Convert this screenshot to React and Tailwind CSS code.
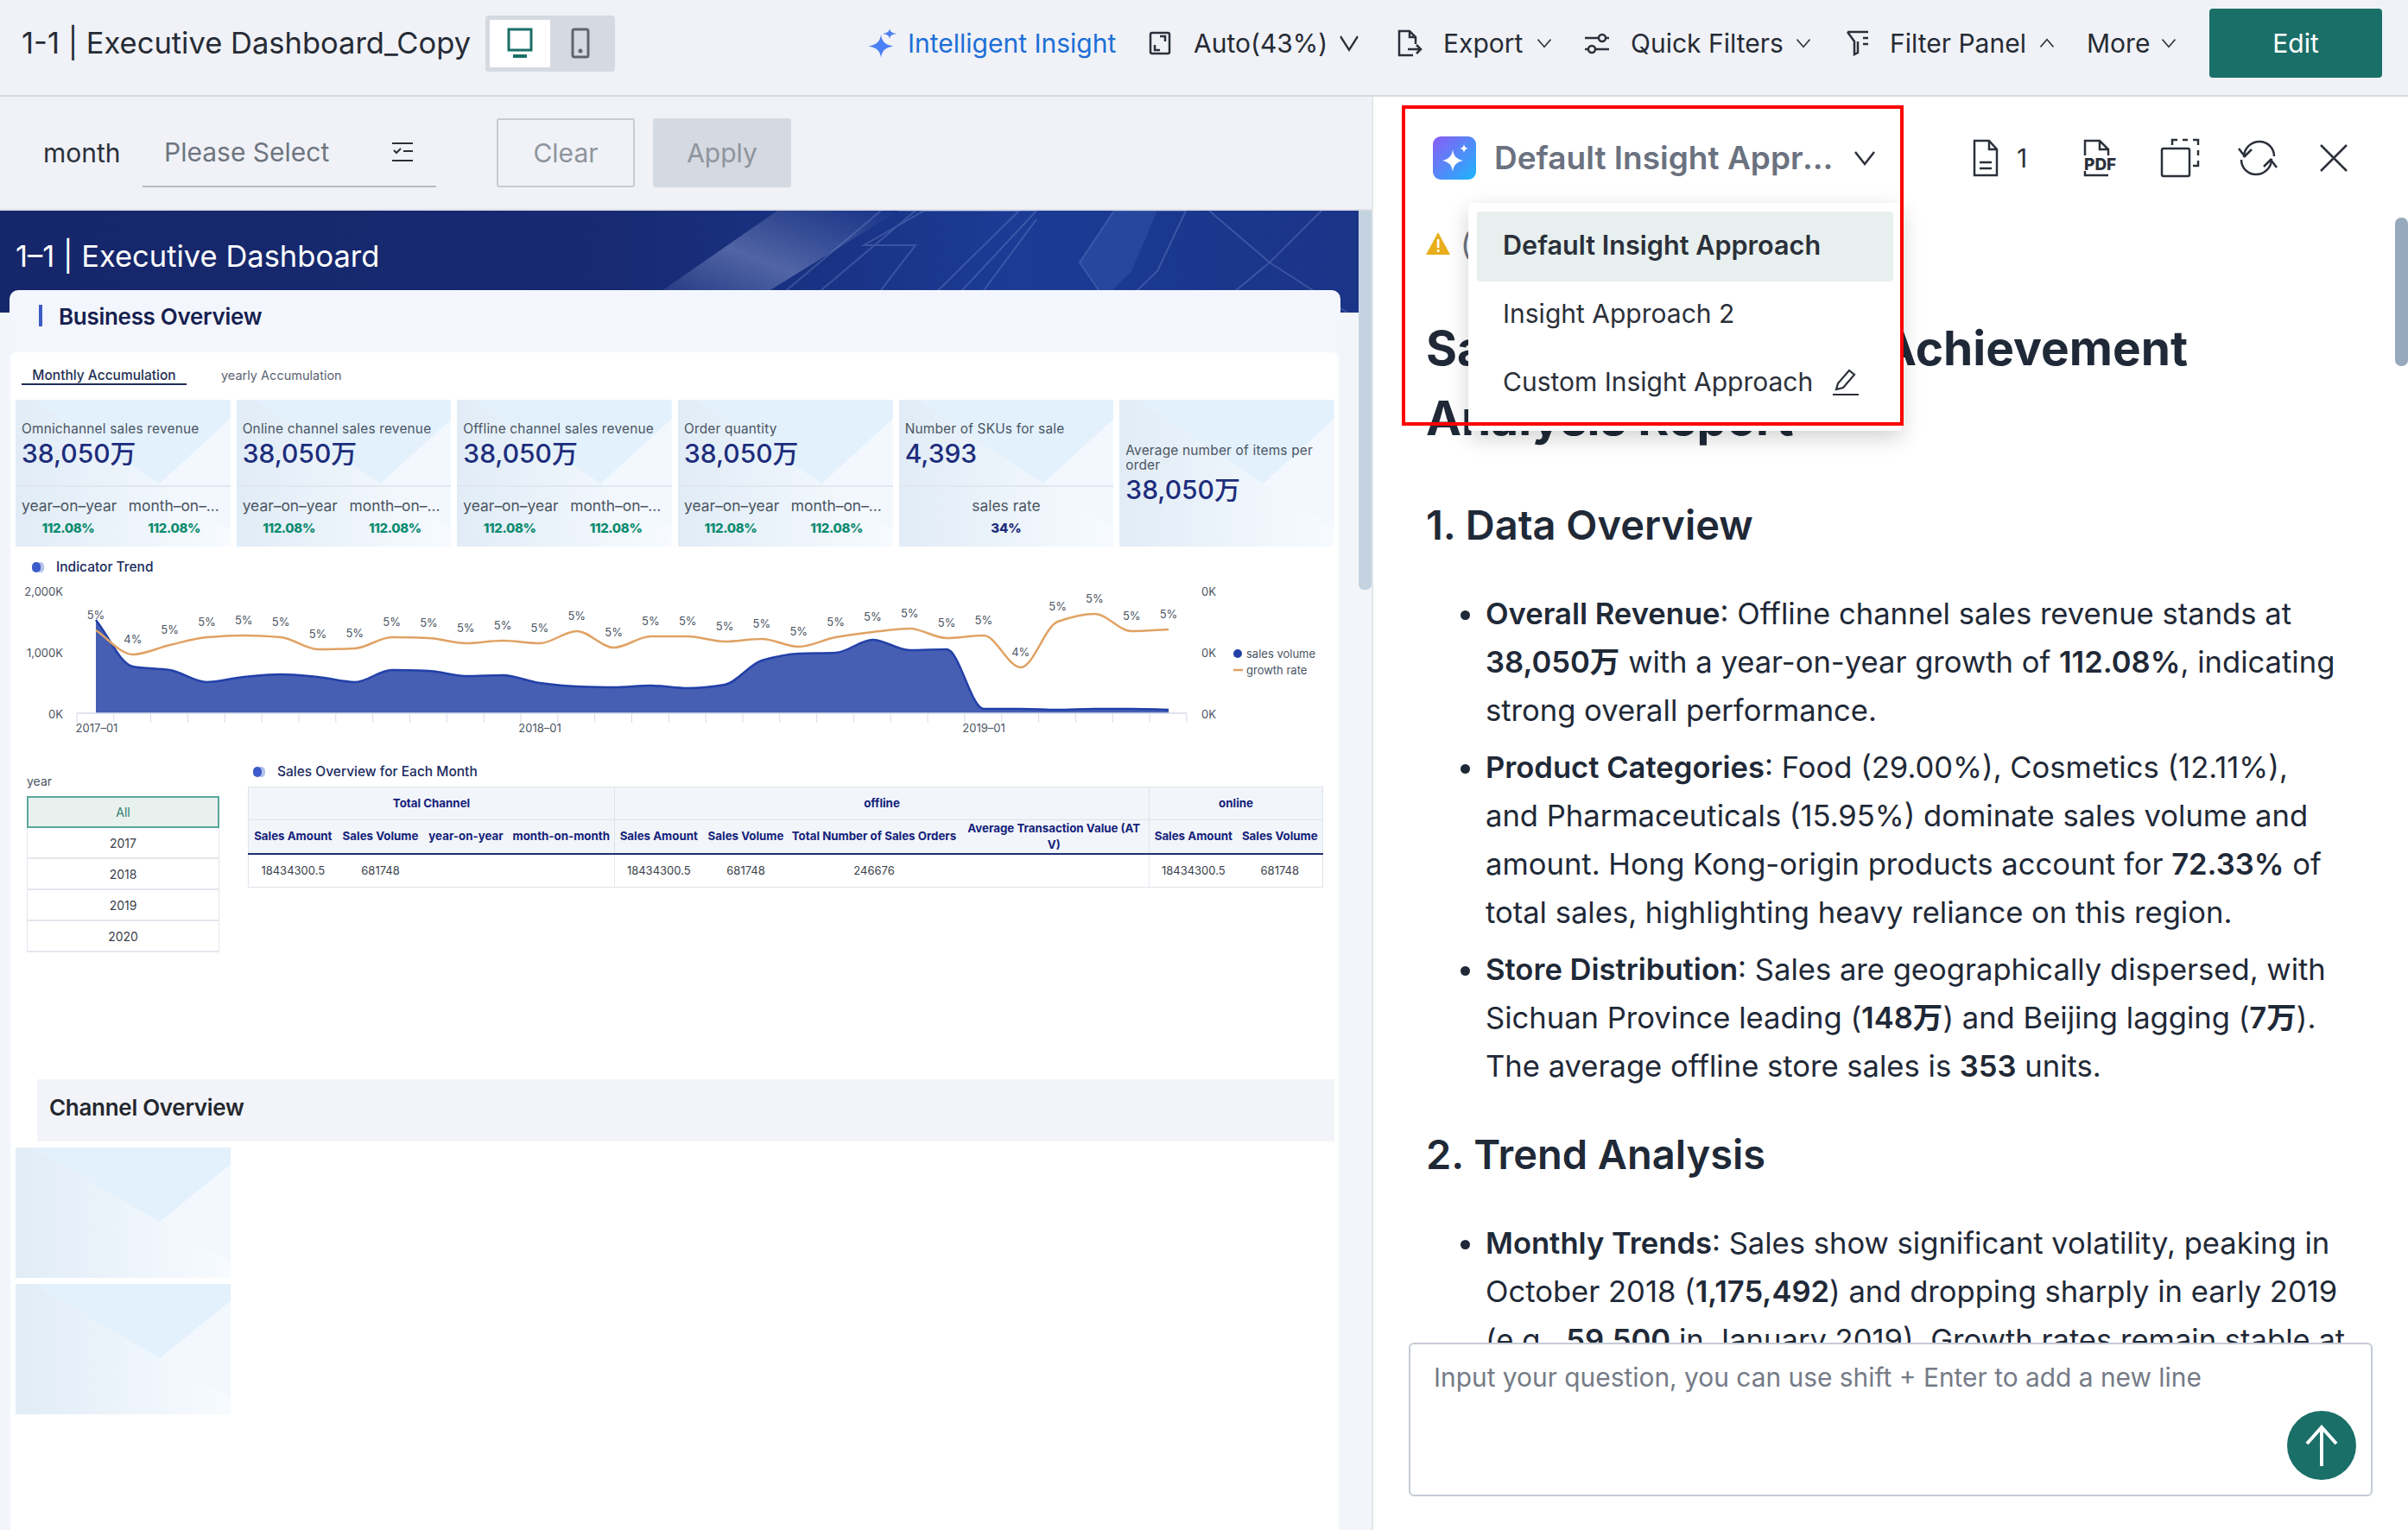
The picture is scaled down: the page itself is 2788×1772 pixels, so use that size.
const kpis = [
  { title: "Omnichannel sales revenue", value: "38,050万" },
  { title: "Online channel sales revenue", value: "38,050万" },
  { title: "Offline channel sales revenue", value: "38,050万" },
  { title: "Order quantity", value: "38,050万" },
];

const areaY = [718, 772, 776, 790, 784, 781, 784, 790, 776, 777, 783, 782, 791, 795, 796, 794, 797, 793, 765, 757, 756, 741, 753, 752, 821, 821, 822, 821, 821, 822];
const lineY = [730, 758, 747, 738, 736, 738, 752, 751, 738, 739, 745, 742, 745, 731, 750, 737, 737, 743, 740, 749, 738, 732, 728, 739, 736, 773, 720, 711, 731, 729];
const xAt = (i) => 111 + i * 42.83;

// monotone curve so the lines do not overshoot between the points
function smooth(ys) {
  const slopes = ys.map((y, i) => {
    if (i === 0) return ys[1] - y;
    if (i === ys.length - 1) return y - ys[i - 1];
    const a = y - ys[i - 1];
    const b = ys[i + 1] - y;
    if (a * b <= 0) return 0;
    return (2 * a * b) / (a + b);
  });
  let d = `M${xAt(0)} ${ys[0]}`;
  for (let i = 0; i < ys.length - 1; i++) {
    d += ` C${xAt(i) + 14.3} ${ys[i] + slopes[i] / 3} ${xAt(i + 1) - 14.3} ${ys[i + 1] - slopes[i + 1] / 3} ${xAt(i + 1)} ${ys[i + 1]}`;
  }
  return d;
}

function CardBg() {
  return (
    <svg className="absolute inset-0 w-full h-full" viewBox="0 0 100 100" preserveAspectRatio="none">
      <defs>
        <linearGradient id="cardBase" x1="0" y1="0" x2="1" y2="0">
          <stop offset="0" stopColor="#e1ecf6" />
          <stop offset="1" stopColor="#f7fbff" />
        </linearGradient>
      </defs>
      <rect width="100" height="100" fill="url(#cardBase)" />
      <polygon points="67,57 100,13 100,88" fill="#f2f8fe" />
      <polygon points="8,0 100,0 100,13 67,57" fill="#e3f1fd" />
    </svg>
  );
}

function Title({ children }) {
  return (
    <div className="flex items-center">
      <span className="relative w-[14px] h-[12px]">
        <span className="absolute left-[5px] top-0 w-[9px] h-[12px] rounded-full bg-[#b4c2ec]"></span>
        <span className="absolute left-0 top-0 w-[10px] h-[12px] rounded-full bg-[#3d5bc9]"></span>
      </span>
      <span className="ml-[14px] text-[15.5px] leading-[20px] font-medium text-[#1a2a5e]">{children}</span>
    </div>
  );
}

function Kpi({ title, value }) {
  return (
    <div className="relative h-[170px] overflow-hidden">
      <CardBg />
      <div className="relative h-[101px] border-b-2 border-[#e0e7ef] pl-[7px] pt-[24px]">
        <div className="text-[15.4px] leading-[20px] text-[#4b5563] tracking-[0.2px] whitespace-nowrap">{title}</div>
        <div className="text-[30px] leading-[36px] font-medium text-[#1d2d7c]">{value}</div>
      </div>
      <div className="relative grid grid-cols-2 pl-[7px] pr-[6px] pt-[11px]">
        <div className="text-[17.4px] leading-[22px] text-[#4b5563] whitespace-nowrap">year–on–year</div>
        <div className="text-[17.4px] leading-[22px] text-[#4b5563] whitespace-nowrap pl-[6px]">month–on–...</div>
        <div className="text-[15px] leading-[20px] font-extrabold text-[#0c8b6f] text-center pt-[5px] tracking-tight pr-[10px]">112.08%</div>
        <div className="text-[15px] leading-[20px] font-extrabold text-[#0c8b6f] text-center pt-[5px] tracking-tight">112.08%</div>
      </div>
    </div>
  );
}

function TrendChart() {
  const ticks = [];
  for (let i = 0; i <= 30; i++) ticks.push(89 + i * 42.83);
  return (
    <svg className="block" width="1538" height="190" viewBox="12 670 1538 190">
      <path d={`${smooth(areaY)} L${xAt(29)} 826 L${xAt(0)} 826 Z`} fill="#465fb3" />
      <path d={smooth(areaY)} fill="none" stroke="#2240a8" strokeWidth="2.5" />
      <path d={smooth(lineY)} fill="none" stroke="#e0a264" strokeWidth="2.5" />
      <line x1="89" y1="826" x2="1374" y2="826" stroke="#d5dbe8" strokeWidth="1.5" />
      {ticks.map((x) => (
        <line key={x} x1={x} y1="826" x2={x} y2="837" stroke="#d5dbe8" />
      ))}
      {lineY.map((y, i) => (
        <text key={i} x={xAt(i)} y={y - 13} textAnchor="middle" fontSize="13" fill="#4b5563">
          {i === 1 || i === 25 ? "4%" : "5%"}
        </text>
      ))}
      <g fontSize="13" fill="#4b5563">
        <text x="73" y="690" textAnchor="end">2,000K</text>
        <text x="73" y="761" textAnchor="end">1,000K</text>
        <text x="73" y="832" textAnchor="end">0K</text>
        <text x="1391" y="690">0K</text>
        <text x="1391" y="761">0K</text>
        <text x="1391" y="832">0K</text>
        <text x="112" y="848" textAnchor="middle">2017–01</text>
        <text x="625" y="848" textAnchor="middle">2018–01</text>
        <text x="1139" y="848" textAnchor="middle">2019–01</text>
        <text x="1443" y="762">sales volume</text>
        <text x="1443" y="781">growth rate</text>
      </g>
      <ellipse cx="1433" cy="757" rx="5" ry="5" fill="#2240a8" />
      <line x1="1428" y1="776" x2="1439" y2="776" stroke="#e0a264" strokeWidth="2.5" />
    </svg>
  );
}

function Chevron({ up, big }) {
  const w = big ? 24 : 18;
  return (
    <svg width={w} height={big ? 22 : 12} viewBox="0 0 24 14" preserveAspectRatio="none" fill="none" stroke="#2b303a" strokeWidth="2">
      <path d={up ? "M2 12 12 2 22 12" : "M2 2 12 12 22 2"} />
    </svg>
  );
}

function SparkIcon() {
  return (
    <svg width="34" height="34" viewBox="0 0 34 34" fill="#4b7ff5">
      <path d="M15 7 C16 15 20 19 29.5 20.5 C20 22 16 26 15 34 C14 26 10 22 0.5 20.5 C10 19 14 15 15 7Z" />
      <path d="M25 0 C25.6 3.5 27 5 33 6 C27 7 25.6 8.5 25 12 C24.4 8.5 23 7 17 6 C23 5 24.4 3.5 25 0Z" />
    </svg>
  );
}

function Toolbar() {
  return (
    <div className="h-[112px] shrink-0 border-b-2 border-[#d5d9e0] bg-[#f0f2f7] flex items-center pb-[10px] text-[#262b35]">
      <div className="ml-[25px] text-[34.5px] leading-[44px] whitespace-nowrap w-[537px]">1-1 | Executive Dashboard_Copy</div>
      <div className="w-[150px] h-[65px] rounded-[4px] bg-[#d5d9e1] flex items-center pl-[5px]">
        <div className="w-[70px] h-[55px] bg-white flex items-center justify-center">
          <svg width="30" height="36" viewBox="0 0 30 36" fill="none" stroke="#1a6f68" strokeWidth="3">
            <rect x="2" y="2" width="26" height="24" />
            <path d="M7 33h16" strokeWidth="4" />
          </svg>
        </div>
        <div className="w-[70px] flex items-center justify-center">
          <svg width="22" height="36" viewBox="0 0 22 36" fill="none" stroke="#5f6670" strokeWidth="3">
            <rect x="2" y="2" width="18" height="32" rx="2" />
            <circle cx="11" cy="27" r="1" fill="#5f6670" />
          </svg>
        </div>
      </div>
      <div className="ml-[293px]"><SparkIcon /></div>
      <div className="ml-[12px] text-[30px] text-[#1d6fd6] whitespace-nowrap w-[279px]">Intelligent Insight</div>
      <svg width="26" height="30" viewBox="0 0 26 30" fill="none" stroke="#2b303a" strokeWidth="2.5">
        <rect x="2" y="3" width="22" height="24" rx="2" />
        <path d="M7 17v6h6M19 13V7h-6" />
      </svg>
      <div className="ml-[26px] text-[30px] whitespace-nowrap w-[168px]">Auto(43%)</div>
      <Chevron big />
      <svg className="ml-[42px]" width="32" height="34" viewBox="0 0 32 34" fill="none" stroke="#2b303a" strokeWidth="2.5">
        <path d="M20 31H4V3h12l7 7v8M16 3v7h7M14 24h15M24 19l5 5-5 5" />
      </svg>
      <div className="ml-[23px] text-[30px] whitespace-nowrap w-[108px]">Export</div>
      <Chevron />
      <svg className="ml-[36px]" width="32" height="32" viewBox="0 0 32 32" fill="none" stroke="#2b303a" strokeWidth="2.5">
        <path d="M2 10h16M26 10h4M2 23h4M14 23h16" />
        <circle cx="22" cy="10" r="4" />
        <circle cx="10" cy="23" r="4" />
      </svg>
      <div className="ml-[23px] text-[30px] whitespace-nowrap w-[191px]">Quick Filters</div>
      <Chevron />
      <svg className="ml-[40px]" width="28" height="32" viewBox="0 0 28 32" fill="none" stroke="#2b303a" strokeWidth="2.5">
        <path d="M2 3h24M2 3l8 11v15l4-2V14M20 10h6M20 17h6" />
      </svg>
      <div className="ml-[23px] text-[30px] whitespace-nowrap w-[173px]">Filter Panel</div>
      <Chevron up />
      <div className="ml-[37px] text-[30px] whitespace-nowrap w-[86px]">More</div>
      <Chevron />
      <div className="ml-[38px] w-[200px] h-[80px] rounded-[4px] bg-[#1a6f68] text-white text-[30px] flex items-center justify-center">Edit</div>
    </div>
  );
}

function FilterBar() {
  return (
    <div className="h-[132px] shrink-0 border-b-2 border-[#dcdfe6] bg-[#f0f2f7] flex items-center">
      <div className="ml-[50px] text-[30px] text-[#2b303a] w-[115px]">month</div>
      <div className="w-[340px] h-[80px] border-b-2 border-[#b8bcc4] flex items-center justify-between pl-[25px] pr-[26px]">
        <span className="text-[30px] text-[#6f7580]">Please Select</span>
        <svg width="26" height="24" viewBox="0 0 26 24" fill="none" stroke="#2b303a" strokeWidth="2">
          <path d="M1 2h24M14 11h11M1 22h24M3 10l3 3 5-5" />
        </svg>
      </div>
      <div className="ml-[70px] w-[160px] h-[80px] rounded-[3px] border-2 border-[#c8ccd4] text-[30px] text-[#8f949d] flex items-center justify-center">Clear</div>
      <div className="ml-[21px] w-[160px] h-[80px] rounded-[3px] bg-[#d5d9e1] text-[30px] text-[#8f949d] flex items-center justify-center">Apply</div>
    </div>
  );
}

function Banner() {
  return (
    <div className="relative h-[118px] bg-[#16276b] overflow-hidden">
      <svg className="absolute inset-0 w-full h-full" viewBox="0 0 1573 118" preserveAspectRatio="none">
        <defs>
          <linearGradient id="bannerGrad" x1="0" y1="0" x2="1" y2="0">
            <stop offset="0" stopColor="#16266a" />
            <stop offset="0.45" stopColor="#172a72" />
            <stop offset="0.75" stopColor="#1b3b95" />
            <stop offset="1" stopColor="#1a3487" />
          </linearGradient>
          <linearGradient id="bandGrad" x1="0" y1="1" x2="1" y2="0">
            <stop offset="0" stopColor="#5a6fb0" stopOpacity="0" />
            <stop offset="0.5" stopColor="#6a7cb5" stopOpacity="0.7" />
            <stop offset="1" stopColor="#5a6fb0" stopOpacity="0" />
          </linearGradient>
        </defs>
        <rect width="1573" height="118" fill="url(#bannerGrad)" />
        <polygon points="730,118 900,0 1040,0 850,118" fill="url(#bandGrad)" />
        <g fill="none" stroke="#8fa6dc" strokeOpacity="0.28" strokeWidth="2">
          <path d="M880 118 1020 0M920 118 1060 0M1000 40 1070 0 1200 0 1090 118 1000 118 1060 40Z" />
          <path d="M1040 0 1180 0 1060 118M1120 118 1200 10M1250 60 1290 0 1373 0 1340 70 1290 118Z" />
          <path d="M1400 0 1470 60 1530 0M1470 60 1400 118M1470 60 1560 118" />
        </g>
        <polygon points="1250,60 1290,0 1340,0 1310,70 1280,100" fill="#3f60b8" fillOpacity="0.35" />
      </svg>
      <div className="relative pl-[18px] pt-[36px] text-[34.5px] leading-[34px] text-white whitespace-nowrap">1–1 | Executive Dashboard</div>
    </div>
  );
}

function YearList() {
  const years = ["2017", "2018", "2019", "2020"];
  return (
    <div className="w-[223px] pt-[35px] shrink-0">
      <div className="text-[14px] leading-[20px] text-[#4b5563]">year</div>
      <div className="mt-[7px] h-[37px] border-2 border-[#5ba79b] bg-[#e9f1ef] text-[#2d7d72] text-[14px] flex items-center justify-center">All</div>
      {years.map((y) => (
        <div key={y} className="h-[36px] border border-t-0 border-b-2 border-[#e4e6ec] text-[14px] text-[#3a3f4a] flex items-center justify-center">{y}</div>
      ))}
    </div>
  );
}

function SalesTable() {
  const headCls = "border border-[#dfe3ea] text-[13.3px] leading-[19px] font-bold text-[#14227a] text-center p-0 whitespace-nowrap";
  const cellCls = "text-[13px] text-[#3a3f4a] text-center p-0";
  return (
    <div className="pt-[24px] w-[1244px]">
      <div className="ml-[6px]"><Title>Sales Overview for Each Month</Title></div>
      <table className="mt-[7px] w-[1244px] table-fixed border-collapse border border-[#dfe3ea]">
        <colgroup>
          <col className="w-[103px]" /><col className="w-[100px]" /><col className="w-[98px]" /><col className="w-[123px]" />
          <col className="w-[102px]" /><col className="w-[100px]" /><col className="w-[197px]" /><col className="w-[220px]" />
          <col className="w-[102px]" /><col className="w-[99px]" />
        </colgroup>
        <thead className="bg-[#f2f5fa]">
          <tr className="h-[38px]">
            <th colSpan={4} className={headCls}>Total Channel</th>
            <th colSpan={4} className={headCls}>offline</th>
            <th colSpan={2} className={headCls}>online</th>
          </tr>
          <tr className="h-[38px] border-b-2 border-[#1f2f72]">
            <th className="text-[13.3px] font-bold text-[#14227a] border-l border-[#dfe3ea]">Sales Amount</th>
            <th className="text-[13.3px] font-bold text-[#14227a]">Sales Volume</th>
            <th className="text-[13.3px] font-bold text-[#14227a]">year-on-year</th>
            <th className="text-[13.3px] font-bold text-[#14227a]">month-on-month</th>
            <th className="text-[13.3px] font-bold text-[#14227a] border-l border-[#dfe3ea]">Sales Amount</th>
            <th className="text-[13.3px] font-bold text-[#14227a]">Sales Volume</th>
            <th className="text-[13.3px] font-bold text-[#14227a] whitespace-nowrap">Total Number of Sales Orders</th>
            <th className="text-[13.3px] leading-[19px] font-bold text-[#14227a] break-all px-[4px]">Average Transaction Value (AT V)</th>
            <th className="text-[13.3px] font-bold text-[#14227a] border-l border-[#dfe3ea]">Sales Amount</th>
            <th className="text-[13.3px] font-bold text-[#14227a]">Sales Volume</th>
          </tr>
        </thead>
        <tbody>
          <tr className="h-[38px]">
            <td className={cellCls}>18434300.5</td>
            <td className={cellCls}>681748</td>
            <td className={cellCls}></td>
            <td className={cellCls}></td>
            <td className={`${cellCls} border-l border-[#e6e9ef]`}>18434300.5</td>
            <td className={cellCls}>681748</td>
            <td className={cellCls}>246676</td>
            <td className={cellCls}></td>
            <td className={`${cellCls} border-l border-[#e6e9ef]`}>18434300.5</td>
            <td className={cellCls}>681748</td>
          </tr>
        </tbody>
      </table>
    </div>
  );
}

function Dashboard() {
  return (
    <div className="relative flex-1 overflow-hidden bg-[#f2f6fb]">
      <div className="w-[1573px]">
        <Banner />
        <div className="relative -mt-[26px] ml-[11px] w-[1541px] rounded-t-[10px] bg-[#f3f6fc]">
          <div className="h-[72px] flex items-start pl-[34px] pt-[17px]">
            <div className="w-[4px] h-[25px] bg-[#3b5cc4]"></div>
            <div className="ml-[19px] text-[26px] leading-[30px] -mt-[1px] font-semibold text-[#15204f] tracking-[-0.3px]">Business Overview</div>
          </div>
          <div className="ml-[1px] w-[1538px] h-[1400px] rounded-t-[8px] bg-white">
            <div className="h-[55px] flex items-start pt-[19px] pl-[13px]">
              <div className="w-[191px] h-[19px] border-b-2 border-[#1f2f55] text-center text-[15.5px] leading-[15px] font-medium text-[#1f2f55] whitespace-nowrap">Monthly Accumulation</div>
              <div className="ml-[40px] text-[14.5px] leading-[16px] text-[#5b6472]">yearly Accumulation</div>
            </div>
            <div className="ml-[6px] w-[1527px] grid grid-cols-6 gap-[7px]">
              {kpis.map((k) => (
                <Kpi key={k.title} title={k.title} value={k.value} />
              ))}
              <div className="relative h-[170px] overflow-hidden">
                <CardBg />
                <div className="relative h-[101px] border-b-2 border-[#e0e7ef] pl-[7px] pt-[24px]">
                  <div className="text-[15.4px] leading-[20px] text-[#4b5563] tracking-[0.2px]">Number of SKUs for sale</div>
                  <div className="text-[30px] leading-[36px] font-medium text-[#1d2d7c]">4,393</div>
                </div>
                <div className="relative text-center pt-[11px]">
                  <div className="text-[17.4px] leading-[22px] text-[#4b5563]">sales rate</div>
                  <div className="text-[15px] leading-[20px] font-extrabold text-[#1d2d7c] pt-[5px]">34%</div>
                </div>
              </div>
              <div className="relative h-[170px] overflow-hidden">
                <CardBg />
                <div className="relative pl-[7px] pt-[50px] pr-[6px]">
                  <div className="text-[15.4px] leading-[17px] text-[#4b5563] tracking-[0.2px]">Average number of items per order</div>
                  <div className="text-[30px] leading-[36px] font-medium text-[#1d2d7c] mt-[2px]">38,050万</div>
                </div>
              </div>
            </div>
            <div className="h-[37px] pt-[14px] pl-[25px]"><Title>Indicator Trend</Title></div>
            <TrendChart />
            <div className="h-[390px] flex pl-[19px]">
              <YearList />
              <div className="ml-[33px]"><SalesTable /></div>
            </div>
            <div className="ml-[31px] w-[1502px] h-[72px] bg-[#f3f4f9] flex items-center pl-[14px] pb-[8px] text-[26px] font-semibold text-[#24272e] tracking-[-0.3px]">Channel Overview</div>
            <div className="ml-[6px] mt-[7px] w-[249px] flex flex-col gap-[7px]">
              <div className="relative h-[151px]"><CardBg /></div>
              <div className="relative h-[151px]"><CardBg /></div>
            </div>
          </div>
        </div>
      </div>
      <div className="absolute right-0 top-0 w-[15px] h-[439px] rounded-b-[6px] bg-[#c5d3e0]"></div>
    </div>
  );
}

function Report() {
  return (
    <div className="flex-1 overflow-hidden pl-[61px] pr-[72px] text-[34.6px] leading-[56px] text-[#1f2937]">
      <div className="h-[56px] flex items-center">
        <svg width="28" height="26" viewBox="0 0 28 26">
          <path d="M14 0 28 26H0Z" fill="#e8ae1c" />
          <rect x="12.8" y="8" width="2.6" height="10" fill="#fff" />
          <rect x="12.8" y="20" width="2.6" height="3" fill="#fff" />
        </svg>
        <span className="ml-[12px] text-[#6b7280]">(</span>
      </div>
      <h1 className="mt-[53px] text-[55px] leading-[81px] font-bold whitespace-nowrap">Sales Progress and Achievement<br />Analysis Report</h1>
      <h2 className="mt-[50px] text-[47px] leading-[65px] font-semibold">1. Data Overview</h2>
      <ul className="mt-[42px] list-disc pl-[69px] flex flex-col gap-[10px]">
        <li><b className="font-semibold">Overall Revenue</b>: Offline channel sales revenue stands at <b className="font-semibold">38,050万</b> with a year-on-year growth of <b className="font-semibold">112.08%</b>, indicating strong overall performance.</li>
        <li><b className="font-semibold">Product Categories</b>: Food (29.00%), Cosmetics (12.11%), and Pharmaceuticals (15.95%) dominate sales volume and amount. Hong Kong-origin products account for <b className="font-semibold">72.33%</b> of total sales, highlighting heavy reliance on this region.</li>
        <li><b className="font-semibold">Store Distribution</b>: Sales are geographically dispersed, with Sichuan Province leading (<b className="font-semibold">148万</b>) and Beijing lagging (<b className="font-semibold">7万</b>). The average offline store sales is <b className="font-semibold">353</b> units.</li>
      </ul>
      <h2 className="mt-[42px] text-[47px] leading-[65px] font-semibold">2. Trend Analysis</h2>
      <ul className="mt-[42px] list-disc pl-[69px]">
        <li><b className="font-semibold">Monthly Trends</b>: Sales show significant volatility, peaking in October 2018 (<b className="font-semibold">1,175,492</b>) and dropping sharply in early 2019 (e.g., <b className="font-semibold">59,500</b> in January 2019). Growth rates remain stable at around 5%.</li>
      </ul>
    </div>
  );
}

function InsightPanel() {
  return (
    <div className="relative flex-1 flex flex-col bg-white border-l border-[#e3e6eb]">
      {/* header */}
      <div className="h-[142px] shrink-0 flex items-center pl-[69px]">
        <svg width="50" height="50" viewBox="0 0 50 50">
          <defs>
            <linearGradient id="logoGrad" x1="0" y1="0" x2="1" y2="1">
              <stop offset="0" stopColor="#8b5cf6" />
              <stop offset="1" stopColor="#1cb5fb" />
            </linearGradient>
          </defs>
          <rect width="50" height="50" rx="9" fill="url(#logoGrad)" />
          <path d="M23 15C24 23 27 26 35 28C27 30 24 33 23 41C22 33 19 30 11 28C19 26 22 23 23 15Z" fill="#fff" />
          <path d="M36 9C36.5 12 38 13.5 41 14C38 14.5 36.5 16 36 19C35.5 16 34 14.5 31 14C34 13.5 35.5 12 36 9Z" fill="#fff" />
        </svg>
        <div className="ml-[21px] w-[396px] truncate text-[37px] leading-[50px] font-semibold text-[#6b7280]">Default Insight Approach</div>
        <svg className="ml-[20px]" width="26" height="20" viewBox="0 0 26 20" fill="none" stroke="#2b303a" strokeWidth="2.5">
          <path d="M2 3 13 17 24 3" />
        </svg>
        <svg className="ml-[111px]" width="32" height="46" viewBox="0 0 32 46" fill="none" stroke="#2b303a" strokeWidth="2.5">
          <path d="M3 3h17l9 10v30H3ZM20 3v10h9M9 28h14M9 35h14" />
        </svg>
        <span className="ml-[20px] text-[30px] text-[#2b303a]">1</span>
        <svg className="ml-[63px]" width="46" height="46" viewBox="0 0 46 46" fill="none" stroke="#2b303a" strokeWidth="2.5">
          <path d="M4 20V3h17l10 10v7M21 3v10h10M4 38v5h27" />
          <text x="3" y="37" fontSize="19" fontWeight="800" fill="#2b303a" stroke="none">PDF</text>
        </svg>
        <svg className="ml-[45px]" width="46" height="46" viewBox="0 0 46 46" fill="none" stroke="#2b303a" strokeWidth="2.5">
          <rect x="2" y="12" width="32" height="32" rx="2" />
          <path d="M14 8V2h6M26 2h6M38 2h6v6M44 14v6M44 26v6h-6" />
        </svg>
        <svg className="ml-[43px]" width="48" height="46" viewBox="0 0 48 46" fill="none" stroke="#2b303a" strokeWidth="2.5">
          <path d="M8 22C8 11 17 4 26 4C36 4 43 12 43 21M40 24C40 35 31 42 22 42C12 42 5 34 5 25M2 12l7 9 8-8M46 34l-7-9-8 8" />
        </svg>
        <svg className="ml-[47px]" width="34" height="34" viewBox="0 0 34 34" fill="none" stroke="#2b303a" strokeWidth="2.5">
          <path d="M2 2 32 32M32 2 2 32" />
        </svg>
      </div>

      <Report />

      {/* question box */}
      <div className="shrink-0 h-[217px] pl-[41px]">
        <div className="w-[1116px] h-[178px] rounded-[6px] border-2 border-[#c6cbd5] bg-white flex justify-between pl-[27px] pr-[17px] pb-[17px]">
          <div className="pt-[16px] text-[29.9px] leading-[44px] text-[#757b87]">Input your question, you can use shift + Enter to add a new line</div>
          <div className="self-end w-[80px] h-[80px] rounded-full bg-[#1a6f68] flex items-center justify-center shrink-0">
            <svg width="40" height="48" viewBox="0 0 40 48" fill="none" stroke="#fff" strokeWidth="4">
              <path d="M20 48V3M3 22 20 3 37 22" />
            </svg>
          </div>
        </div>
      </div>

      {/* scrollbar thumb */}
      <div className="absolute right-0 top-[140px] w-[15px] h-[172px] rounded-[7px] bg-[#97a9bc]"></div>

      {/* dropdown menu */}
      <div className="absolute left-[110px] top-[123px] w-[502px] h-[264px] rounded-[4px] bg-white shadow-[0_8px_24px_rgba(0,0,0,0.18)] p-[10px] text-[30px] text-[#2b303a]">
        <div className="h-[81px] rounded-[4px] bg-[#e8f0ef] pl-[30px] pb-[3px] flex items-center text-[30.6px] font-semibold whitespace-nowrap">Default Insight Approach</div>
        <div className="h-[74px] pl-[30px] flex items-center whitespace-nowrap">Insight Approach 2</div>
        <div className="h-[84px] pl-[30px] flex items-center whitespace-nowrap">
          Custom Insight Approach
          <svg className="ml-[22px]" width="32" height="32" viewBox="0 0 32 32" fill="none" stroke="#2b303a" strokeWidth="2.2">
            <path d="M1 31h30M5 25l2-7L20 3l6 5L13 23Z" />
          </svg>
        </div>
      </div>

      {/* red highlight */}
      <div className="absolute left-[33px] top-[10px] w-[581px] h-[371px] border-4 border-[#ff0000]"></div>
    </div>
  );
}

export default function App() {
  return (
    <div className="w-[2788px] h-[1772px] overflow-hidden flex flex-col bg-white [font-family:Inter,'Noto_Sans_CJK_SC',sans-serif]">
      <Toolbar />
      <div className="flex-1 flex min-h-0">
        <div className="w-[1589px] shrink-0 flex flex-col border-r border-[#e3e6eb]">
          <FilterBar />
          <Dashboard />
        </div>
        <InsightPanel />
      </div>
    </div>
  );
}
